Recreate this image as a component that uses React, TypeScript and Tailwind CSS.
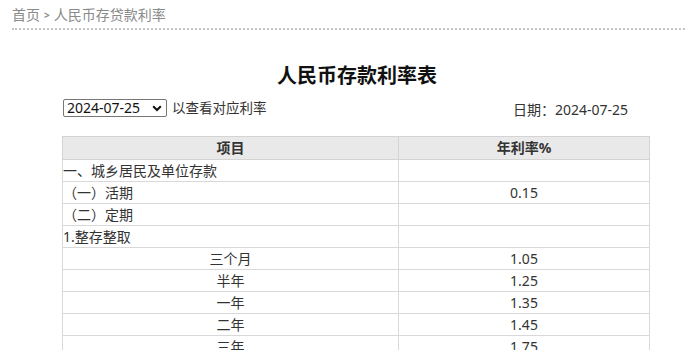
import React from "react";

const rows: { label: string; rate: string; center?: boolean }[] = [
  { label: "一、城乡居民及单位存款", rate: "" },
  { label: "（一）活期", rate: "0.15" },
  { label: "（二）定期", rate: "" },
  { label: "1.整存整取", rate: "" },
  { label: "三个月", rate: "1.05", center: true },
  { label: "半年", rate: "1.25", center: true },
  { label: "一年", rate: "1.35", center: true },
  { label: "二年", rate: "1.45", center: true },
  { label: "三年", rate: "1.75", center: true },
  { label: "五年", rate: "1.80", center: true },
];

export default function App() {
  return (
    <div
      className="w-[700px] h-[350px] overflow-hidden bg-white text-[#333]"
      style={{ fontFamily: '"Noto Sans", "Noto Sans CJK SC", sans-serif' }}
    >
      <div className="mx-[12px] mr-[15px] pt-[6px] pb-[4px] border-b-2 border-dotted border-[#c4c4c4]">
        <div className="text-[14px] leading-[18px] text-[#8a8a8a] flex items-center gap-[4px]">
          <span>首页</span>
          <span className="text-[10px] font-bold">&gt;</span>
          <span>人民币存贷款利率</span>
        </div>
      </div>

      <h1 className="mt-[32px] text-center text-[20px] leading-[28px] font-bold text-[#111] pl-[14px]">
        人民币存款利率表
      </h1>

      <div className="ml-[63px] w-[565px] mt-[8px] flex justify-between items-start">
        <div className="flex items-center gap-[5px] mt-[1px]">
          <div className="h-[18px] w-[104px] border border-[#767676] rounded-[2px] flex items-center justify-between pl-[3px] pr-[4px] text-[14px] leading-[16px] text-[#111]">
            <span>2024-07-25</span>
            <svg width="10" height="7" viewBox="0 0 10 7">
              <path d="M1.2 1.3 L5 5 L8.8 1.3" stroke="#111" strokeWidth="2" fill="none" />
            </svg>
          </div>
          <span className="text-[13.5px] leading-[18px] text-[#333]">以查看对应利率</span>
        </div>
        <div className="text-[14px] leading-[18px] text-[#333] mt-[3px]">日期：2024-07-25</div>
      </div>

      <table className="ml-[62px] mt-[17px] w-[588px] border-collapse text-[14px] text-[#333]">
        <thead>
          <tr className="bg-[#e9e9e9]">
            <th className="w-[336px] h-[23px] border border-[#d4d4d4] font-bold text-center leading-[18px] p-0">项目</th>
            <th className="h-[23px] border border-[#d4d4d4] font-bold text-center leading-[18px] p-0">年利率%</th>
          </tr>
        </thead>
        <tbody>
          {rows.map((r, i) => (
            <tr key={i}>
              <td
                className={
                  r.center
                    ? "h-[22px] border border-[#d9d9d9] p-0 leading-[18px] text-center"
                    : "h-[22px] border border-[#d9d9d9] p-0 leading-[18px] text-left"
                }
              >
                {r.label}
              </td>
              <td className="h-[22px] border border-[#d9d9d9] p-0 leading-[18px] text-center">{r.rate}</td>
            </tr>
          ))}
        </tbody>
      </table>
    </div>
  );
}
